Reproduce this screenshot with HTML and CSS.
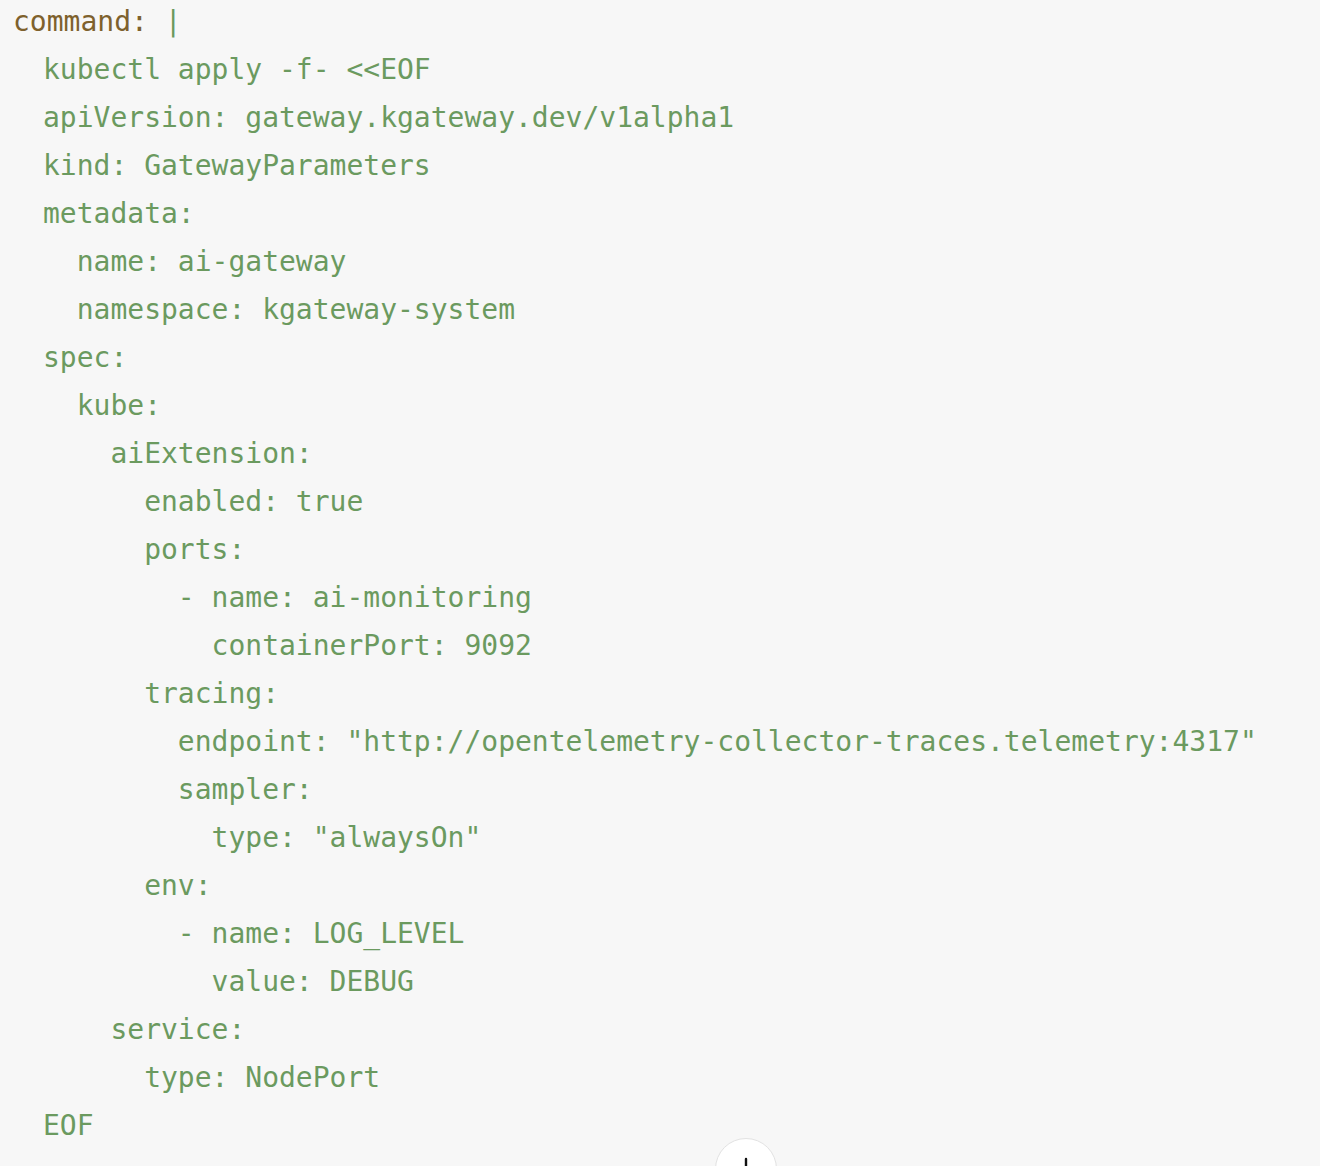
FILE: index.html
```html
<!DOCTYPE html>
<html>
<head>
<meta charset="utf-8">
<link rel="stylesheet" href="styles.css">
</head>
<body>
<main class="page">
<div class="code-block">
<pre class="code head"><span class="key">command:</span> <span class="pipe">|</span></pre>
<pre class="code body">kubectl apply -f- &lt;&lt;EOF
apiVersion: gateway.kgateway.dev/v1alpha1
kind: GatewayParameters
metadata:
  name: ai-gateway
  namespace: kgateway-system
spec:
  kube:
    aiExtension:
      enabled: true
      ports:
        - name: ai-monitoring
          containerPort: 9092
      tracing:
        endpoint: "http://opentelemetry-collector-traces.telemetry:4317"
        sampler:
          type: "alwaysOn"
      env:
        - name: LOG_LEVEL
          value: DEBUG
    service:
      type: NodePort
EOF</pre>
</div>
<button class="scroll-btn" aria-label="Scroll down">
<svg width="30" height="30" viewBox="0 0 30 30" fill="none" stroke="#111" stroke-width="2.4" stroke-linecap="round" stroke-linejoin="round"><path d="M15 6v18M8 17l7 7 7-7"/></svg>
</button>
</main>
</body>
</html>
```
FILE: styles.css
```css
html, body {
  margin: 0;
  padding: 0;
  background: #f7f7f7;
  overflow: hidden;
}
.page {
  position: relative;
  width: 1320px;
  height: 1166px;
  overflow: hidden;
  background: #f7f7f7;
}
.code-block {
  margin-top: -2px;
  display: flex;
  flex-direction: column;
}
.code {
  margin: 0;
  font-family: "DejaVu Sans Mono", "Liberation Mono", monospace;
  font-size: 28px;
  line-height: 48px;
  color: #6b9a5f;
  white-space: pre;
}
.head {
  padding-left: 13px;
}
.body {
  padding-left: 43px;
}
.key {
  color: #7e612d;
}
.pipe {
  color: #6b9a5f;
}
.scroll-btn {
  position: absolute;
  left: 715px;
  top: 1138px;
  width: 62px;
  height: 62px;
  border-radius: 50%;
  background: #ffffff;
  border: 1.5px solid #e2e2e2;
  display: flex;
  align-items: flex-start;
  justify-content: center;
  padding: 14px 0 0 0;
  box-sizing: border-box;
}
```
